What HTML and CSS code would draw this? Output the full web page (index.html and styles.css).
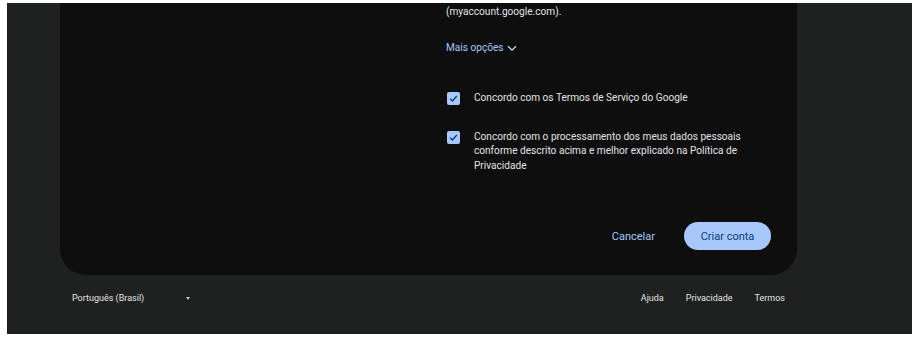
FILE: index.html
```html
<!DOCTYPE html>
<html lang="pt-BR">
<head>
  <meta charset="UTF-8" />
  <title>Criar sua Conta do Google</title>
  <link rel="stylesheet" href="styles.css">
</head>
<body>

<div class="page">
  <div class="card">
    <div class="side"></div>
    <div class="main">
      <p class="lead">(myaccount.google.com).</p>

      <a class="more" href="#">Mais opções
        <svg width="10" height="7" viewBox="0 0 10 7"><path d="M1 1.2 5 5.2 9 1.2" fill="none" stroke="#a8c7fa" stroke-width="1.6"/></svg>
      </a>

      <label class="check first">
        <span class="box"><svg width="13" height="13" viewBox="0 0 13 13"><path d="M3.2 6.8 5.4 9 9.8 4" fill="none" stroke="#0b3a7a" stroke-width="1.3"/></svg></span>
        <span class="label">Concordo com os Termos de Serviço do Google</span>
      </label>

      <label class="check second">
        <span class="box"><svg width="13" height="13" viewBox="0 0 13 13"><path d="M3.2 6.8 5.4 9 9.8 4" fill="none" stroke="#0b3a7a" stroke-width="1.3"/></svg></span>
        <span class="label">Concordo com o processamento dos meus dados pessoais conforme descrito acima e melhor explicado na Política de Privacidade</span>
      </label>

      <div class="actions">
        <button class="text-btn">Cancelar</button>
        <button class="primary">Criar conta</button>
      </div>
    </div>
  </div>

  <div class="footer">
    <div class="lang">Português (Brasil) <span class="caret"></span></div>
    <div class="links">
      <a href="#">Ajuda</a>
      <a href="#">Privacidade</a>
      <a href="#">Termos</a>
    </div>
  </div>
</div>

</body>
</html>
```

FILE: styles.css
```css
body {
  margin: 0;
  background: #ffffff;
  font-family: Roboto, 'Noto Sans', sans-serif;
}
.page {
  margin: 3px 3px 3px 7px;
  height: 331px;
  background: #1f2020;
  overflow: hidden;
}
.card {
  margin-left: 53px;
  width: 737px;
  height: 272px;
  box-sizing: border-box;
  background: #0e0e0e;
  border-radius: 0 0 26px 26px;
  display: grid;
  grid-template-columns: 1fr 325px;
  padding: 0 26px 0 0;
}
.main {
  display: flex;
  flex-direction: column;
  align-items: flex-start;
  color: #e3e3e3;
  font-size: 10.1px;
}
.lead {
  margin: 1px 0 0;
  line-height: 16px;
}
.more {
  margin-top: 20px;
  line-height: 16px;
  color: #a8c7fa;
  text-decoration: none;
  display: flex;
  align-items: center;
  gap: 3px;
}
.check {
  display: flex;
  gap: 14px;
  align-items: flex-start;
  line-height: 14.5px;
}
.check.first {
  margin-top: 35px;
}
.check.second {
  margin-top: 24px;
}
.box {
  width: 13px;
  height: 13px;
  flex: none;
  margin: 1px 0 0 1px;
  background: #a8c7fa;
  border-radius: 2px;
  display: flex;
}
.actions {
  align-self: stretch;
  margin-top: 49px;
  display: flex;
  justify-content: flex-end;
  align-items: center;
  gap: 29px;
}
button {
  font-family: inherit;
  font-size: 11px;
  border: none;
  cursor: pointer;
}
.text-btn {
  background: none;
  color: #a8c7fa;
  padding: 0;
}
.primary {
  background: #a8c7fa;
  color: #0b3a7a;
  height: 28px;
  width: 87px;
  border-radius: 14px;
}
.footer {
  display: flex;
  justify-content: space-between;
  align-items: center;
  margin: 16px 0 0 65px;
  width: 713px;
  font-size: 9px;
  color: #e3e3e3;
  line-height: 14px;
}
.lang {
  display: flex;
  align-items: center;
}
.caret {
  margin-left: 42px;
  width: 0;
  height: 0;
  border-left: 2.5px solid transparent;
  border-right: 2.5px solid transparent;
  border-top: 3px solid #c4c7c5;
}
.links {
  display: flex;
  gap: 22px;
}
.links a {
  color: #e3e3e3;
  text-decoration: none;
}
```
